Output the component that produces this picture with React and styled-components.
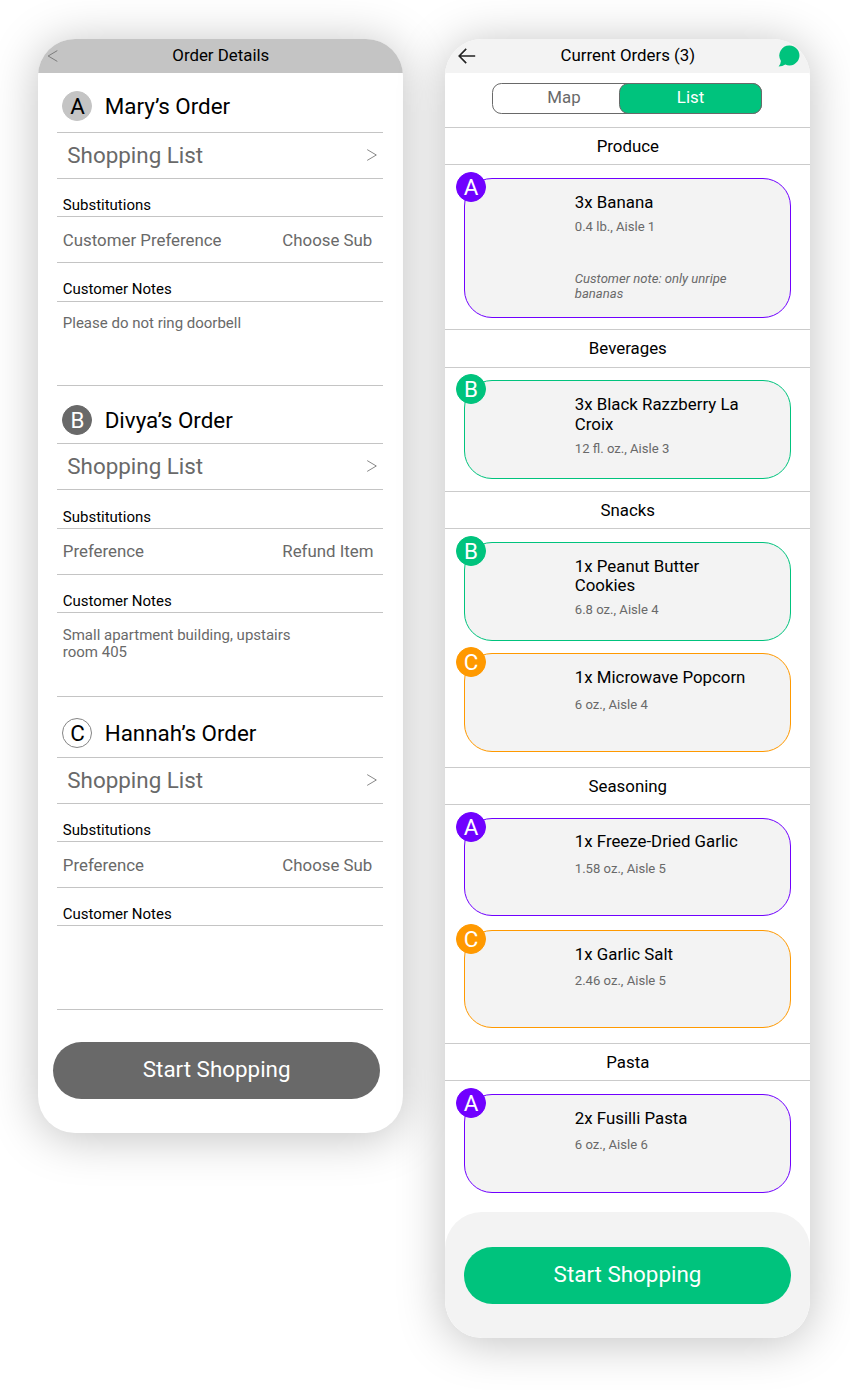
import React from "react";
import styled, { createGlobalStyle } from "styled-components";

const GlobalStyle = createGlobalStyle`
  * { box-sizing: border-box; }
  body {
    margin: 0;
    background: #fff;
    font-family: Roboto, "Liberation Sans", sans-serif;
    color: #000;
  }
  button { font-family: inherit; }
`;

const Board = styled.main`
  display: flex;
  align-items: flex-start;
  gap: 42px;
  width: 850px;
  height: 1390px;
  padding: 39px 0 0 38.3px;
  overflow: hidden;
`;

const Phone = styled.section`
  display: flex;
  flex-direction: column;
  width: 365px;
  height: ${(p) => p.$height}px;
  border-radius: 37px;
  overflow: hidden;
  background: #fff;
  box-shadow: 0 4px 47px rgba(0, 0, 0, 0.25);
`;

const TopBar = styled.header`
  display: grid;
  grid-template-columns: 44px 1fr 44px;
  align-items: center;
  flex: none;
  height: 34.3px;
  background: ${(p) => p.$bg};
`;

const TopTitle = styled.h1`
  margin: 0;
  padding-bottom: 1.4px;
  font-size: 16.85px;
  font-weight: 400;
  line-height: 20px;
  text-align: center;
`;

const BarIcon = styled.span`
  display: flex;
  justify-content: ${(p) => p.$side};
  padding: ${(p) => p.$pad};
`;

const Order = styled.article`
  margin: 0 20px 0 19px;
`;

const OrderHead = styled.div`
  display: flex;
  align-items: flex-start;
  gap: 12.2px;
  height: ${(p) => p.$height}px;
  padding: ${(p) => p.$top}px 0 0 5.2px;
  border-bottom: 1px solid #c4c4c4;
`;

const Badge = styled.span`
  display: flex;
  align-items: center;
  justify-content: center;
  flex: none;
  width: 30px;
  height: 30px;
  border-radius: 50%;
  border: 1px solid ${(p) => p.$border || p.$bg};
  background: ${(p) => p.$bg};
  color: ${(p) => p.$color};
  font-size: 22.4px;
  line-height: 28px;
`;

const OrderName = styled.h2`
  margin: 0;
  font-size: 22.4px;
  font-weight: 400;
  line-height: 30px;
`;

const ListLink = styled.a`
  display: flex;
  align-items: center;
  justify-content: space-between;
  height: 46px;
  padding: 0 5px 1px 10px;
  border-bottom: 1px solid #c4c4c4;
  color: #696969;
  font-size: 22.4px;
`;

const Label = styled.h3`
  display: flex;
  align-items: flex-end;
  height: 38.4px;
  margin: 0;
  padding: 0 5.5px 1.7px;
  border-bottom: 1px solid #c4c4c4;
  font-size: 15px;
  font-weight: 400;
  line-height: 17.5px;
`;

const Preference = styled.div`
  display: flex;
  align-items: center;
  justify-content: space-between;
  height: 45.8px;
  padding: 0 0 0 5.5px;
  border-bottom: 1px solid #c4c4c4;
  color: #696969;
  font-size: 16.85px;
`;

const Choice = styled.span`
  width: 101px;
`;

const Notes = styled.p`
  height: 84px;
  margin: 0;
  padding: 13.6px 80px 0 5.5px;
  border-bottom: 1px solid #c4c4c4;
  color: #696969;
  font-size: 15px;
  line-height: 17.5px;
`;

const StartButton = styled.button`
  display: block;
  flex: none;
  width: 327px;
  height: 57px;
  margin: ${(p) => p.$margin};
  padding: 0 0 ${(p) => p.$lift}px;
  border: 0;
  border-radius: 28.5px;
  background: ${(p) => p.$bg};
  color: #fff;
  font-size: 22.4px;
`;

const TabStrip = styled.div`
  display: flex;
  justify-content: center;
  flex: none;
  height: 53.7px;
  padding: 9.5px 1.6px 0 0;
`;

const Toggle = styled.div`
  display: flex;
  width: 270px;
  height: 31px;
  border: 1px solid #696969;
  border-radius: 9.4px;
`;

const Tab = styled.button`
  flex: none;
  width: ${(p) => (p.$active ? 143 : 127)}px;
  height: 31px;
  margin: -1px;
  padding: ${(p) => (p.$active ? "0 0 2px" : "0 0 2px 17px")};
  border: 1px solid ${(p) => (p.$active ? "#696969" : "transparent")};
  border-radius: 9.4px;
  background: ${(p) => (p.$active ? "#00c37d" : "transparent")};
  color: ${(p) => (p.$active ? "#fff" : "#696969")};
  font-size: 16.85px;
  & + & { margin-left: 1px; }
`;

const GroupTitle = styled.h2`
  display: flex;
  align-items: center;
  justify-content: center;
  flex: none;
  height: 38.4px;
  margin: 0;
  border: solid #cbcbcb;
  border-width: 1px 0;
  font-size: 16.85px;
  font-weight: 400;
`;

const GroupBody = styled.div`
  display: flex;
  flex-direction: column;
  gap: ${(p) => p.$gap}px;
  flex: none;
  padding: 12.6px 19.2px ${(p) => p.$bottom}px 18.7px;
`;

const Card = styled.article`
  position: relative;
  display: flex;
  flex-direction: column;
  height: ${(p) => p.$height}px;
  padding: 13.6px 38px 0 109.8px;
  border: 1px solid ${(p) => p.$color};
  border-radius: 28px;
  background: #f3f3f3;
`;

const CardBadge = styled(Badge)`
  position: absolute;
  left: -9px;
  top: -7px;
`;

const ItemName = styled.h3`
  margin: 0 0 ${(p) => p.$gap}px;
  font-size: 16.85px;
  font-weight: 400;
  line-height: 19.75px;
`;

const ItemMeta = styled.p`
  margin: 0;
  color: #696969;
  font-size: 13.1px;
  line-height: 15.4px;
`;

const ItemNote = styled(ItemMeta)`
  margin-top: 37px;
  font-style: italic;
`;

const Footer = styled.footer`
  flex: 1;
  padding-top: 35px;
  border-radius: 37px;
  background: #f3f3f3;
`;

const orders = [
  { id: "A", name: "Mary’s Order", height: 59.7, top: 17.7, bg: "#c4c4c4", fg: "#000", pref: "Customer Preference", choice: "Choose Sub", note: "Please do not ring doorbell" },
  { id: "B", name: "Divya’s Order", height: 58.8, top: 19, bg: "#696969", fg: "#fff", pref: "Preference", choice: "Refund Item", note: "Small apartment building, upstairs room 405" },
  { id: "C", name: "Hannah’s Order", height: 60.9, top: 21.4, bg: "#fff", border: "#858585", fg: "#000", pref: "Preference", choice: "Choose Sub", note: "" },
];

const tones = { A: "#7000ff", B: "#00c37d", C: "#ff9900" };

const groups = [
  { title: "Produce", bottom: 11.3, items: [{ by: "A", name: "3x Banana", meta: "0.4 lb., Aisle 1", note: "Customer note: only unripe bananas", height: 140, gap: 6.2 }] },
  { title: "Beverages", bottom: 11.7, items: [{ by: "B", name: "3x Black Razzberry La Croix", meta: "12 fl. oz., Aisle 3", height: 99, gap: 7 }] },
  { title: "Snacks", bottom: 14.8, gap: 12.8, items: [
    { by: "B", name: "1x Peanut Butter Cookies", meta: "6.8 oz., Aisle 4", height: 98.6, gap: 6 },
    { by: "C", name: "1x Microwave Popcorn", meta: "6 oz., Aisle 4", height: 98.6, gap: 9 },
  ] },
  { title: "Seasoning", bottom: 14.6, gap: 14, items: [
    { by: "A", name: "1x Freeze-Dried Garlic", meta: "1.58 oz., Aisle 5", height: 98.4, gap: 9 },
    { by: "C", name: "1x Garlic Salt", meta: "2.46 oz., Aisle 5", height: 98.4, gap: 9 },
  ] },
  { title: "Pasta", bottom: 19, items: [{ by: "A", name: "2x Fusilli Pasta", meta: "6 oz., Aisle 6", height: 98.6, gap: 9 }] },
];

const Chevron = ({ left }) => (
  <svg width="12" height="14" viewBox="0 0 12 14" fill="none" stroke="#696969" strokeWidth="0.8">
    <path d={left ? "M10.3 1.6 L1.2 7 L10.3 12.4" : "M1.2 1.6 L10.3 7 L1.2 12.4"} />
  </svg>
);

const BackArrow = () => (
  <svg width="20" height="18" viewBox="0 0 20 18" fill="none" stroke="#222" strokeWidth="1.6">
    <path d="M18.2 9 H2.2 M9.2 1.9 L2.2 9 L9.2 16.1" />
  </svg>
);

const ChatBubble = () => (
  <svg width="22" height="22" viewBox="0 0 22 22" fill="#00c37d">
    <path d="M11.4 0.5 A10 10 0 1 1 7.3 19.6 Q4.5 21.4 0.6 21.5 Q2.7 19.2 2.9 15.9 A10 10 0 0 1 11.4 0.5 Z" />
  </svg>
);

function OrderDetails() {
  return (
    <Phone $height={1093.7}>
      <TopBar $bg="#c4c4c4">
        <BarIcon $side="flex-start" $pad="0 0 0 8.9px"><Chevron left /></BarIcon>
        <TopTitle>Order Details</TopTitle>
      </TopBar>
      {orders.map((o) => (
        <Order key={o.id}>
          <OrderHead $height={o.height} $top={o.top}>
            <Badge $bg={o.bg} $border={o.border} $color={o.fg}>{o.id}</Badge>
            <OrderName>{o.name}</OrderName>
          </OrderHead>
          <ListLink>Shopping List<Chevron /></ListLink>
          <Label>Substitutions</Label>
          <Preference>{o.pref}<Choice>{o.choice}</Choice></Preference>
          <Label>Customer Notes</Label>
          <Notes>{o.note}</Notes>
        </Order>
      ))}
      <StartButton $bg="#696969" $lift={3} $margin="31.2px 0 0 14.9px">Start Shopping</StartButton>
    </Phone>
  );
}

function CurrentOrders() {
  return (
    <Phone $height={1299}>
      <TopBar $bg="#f3f3f3">
        <BarIcon $side="flex-start" $pad="0 0 0 11.9px"><BackArrow /></BarIcon>
        <TopTitle>Current Orders (3)</TopTitle>
        <BarIcon $side="flex-end" $pad="0 10px 0 0"><ChatBubble /></BarIcon>
      </TopBar>
      <TabStrip>
        <Toggle>
          <Tab>Map</Tab>
          <Tab $active>List</Tab>
        </Toggle>
      </TabStrip>
      {groups.map((g) => (
        <React.Fragment key={g.title}>
          <GroupTitle>{g.title}</GroupTitle>
          <GroupBody $gap={g.gap || 0} $bottom={g.bottom}>
            {g.items.map((it) => (
              <Card key={it.name} $height={it.height} $color={tones[it.by]}>
                <CardBadge $bg={tones[it.by]} $color="#fff">{it.by}</CardBadge>
                <ItemName $gap={it.gap}>{it.name}</ItemName>
                <ItemMeta>{it.meta}</ItemMeta>
                {it.note && <ItemNote>{it.note}</ItemNote>}
              </Card>
            ))}
          </GroupBody>
        </React.Fragment>
      ))}
      <Footer>
        <StartButton $bg="#00c37d" $lift={2} $margin="0 0 0 18.7px">Start Shopping</StartButton>
      </Footer>
    </Phone>
  );
}

export default function App() {
  return (
    <>
      <GlobalStyle />
      <Board>
        <OrderDetails />
        <CurrentOrders />
      </Board>
    </>
  );
}
